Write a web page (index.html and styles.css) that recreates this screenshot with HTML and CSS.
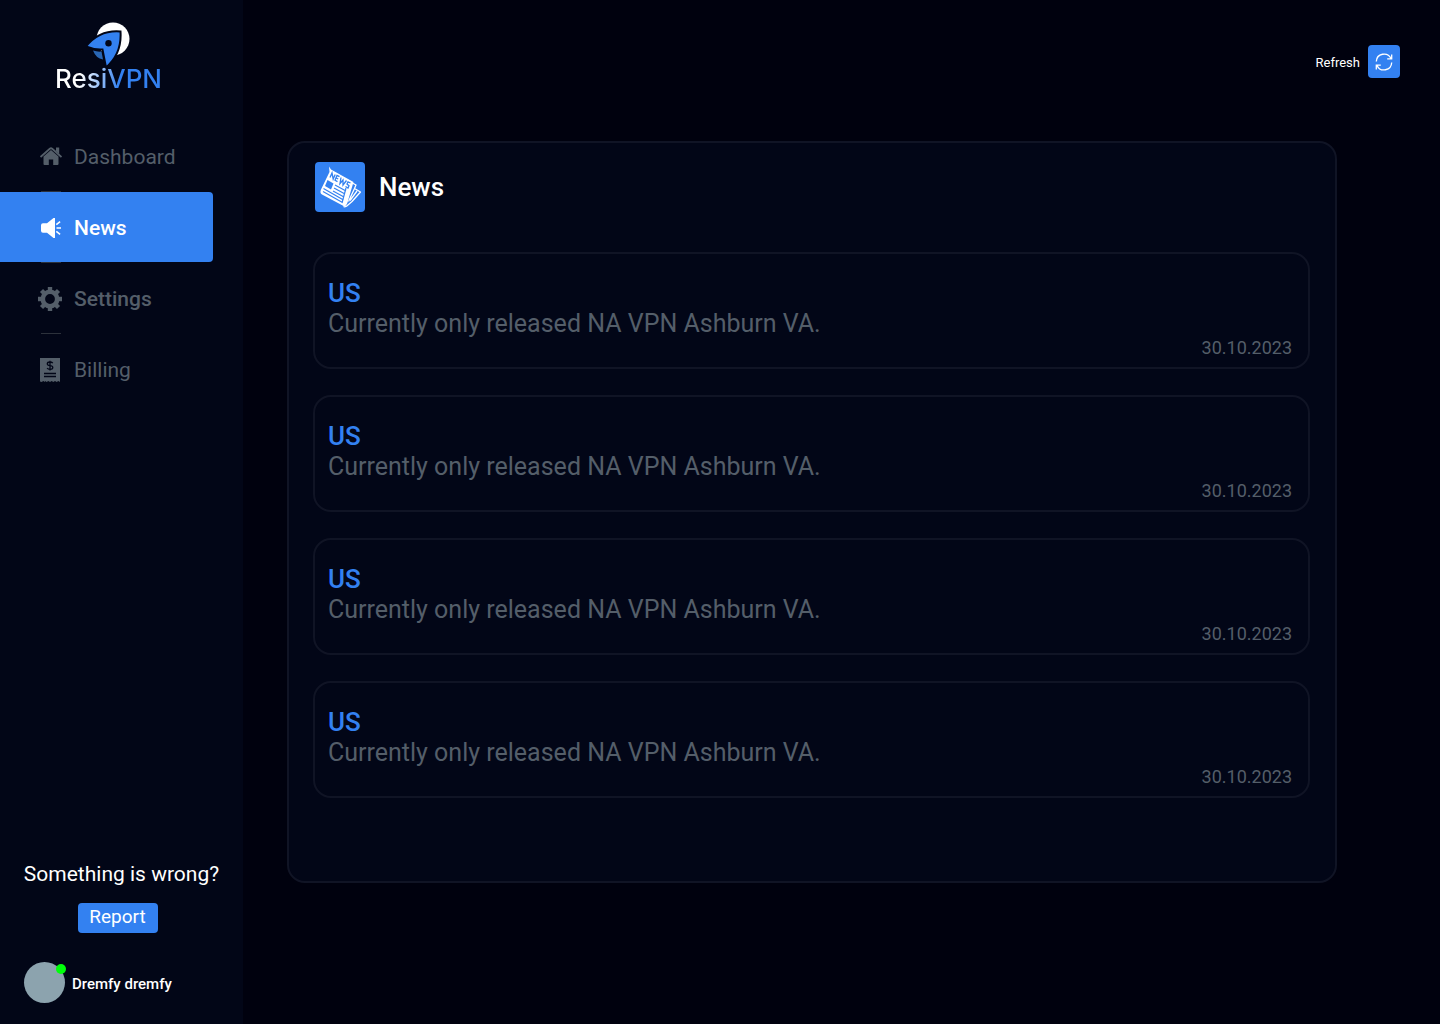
FILE: index.html
```html
<!DOCTYPE html>
<html lang="en">
<head>
<meta charset="utf-8">
<meta name="viewport" content="width=device-width, initial-scale=1">
<title>ResiVPN – News</title>
<link rel="stylesheet" href="styles.css">
</head>
<body>
<div class="app">
  <aside class="sidebar">
    <div class="logo">
      <svg class="logo-mark" width="46" height="46" viewBox="0 0 46 46" aria-hidden="true">
        <circle cx="27" cy="17" r="16.500" fill="#fff"/>
        <path d="M34.500 9.500C23 8.500 10 12 0 24.500c6 2.500 11 3.500 16.500 3l3.500 18C31 36 35.500 24 34.500 9.500Z" fill="#3381f1" stroke="#020617" stroke-width="2"/>
        <circle cx="22.500" cy="21.300" r="3.200" fill="#020617"/>
        <path d="M7 28.500c3 1 6 1.400 8.500 1l1.500 8q-7-1-10-9Z" fill="#2966b4"/>
      </svg>
      <span class="logo-name">ResiVPN</span>
    </div>
    <nav class="nav" aria-label="Main">
      <a class="nav-item" href="#dashboard">
        <svg class="nav-icon" viewBox="0 0 24 24" aria-hidden="true">
          <path d="M13 5 5.500 11.500V19q0 1 1 1h4.300v-5.500h4.400V20h4.300q1 0 1-1v-7.500Z"/>
          <path d="m2.500 12 9.300-8.200q1.200-1 2.400 0l9.300 8.200" fill="none" stroke="currentColor" stroke-width="1.800"/>
          <path d="M18 2.500h3.200V9L18 6.200Z"/>
        </svg>
        Dashboard
      </a>
      <a class="nav-item nav-item-active" href="#news" aria-current="page">
        <svg class="nav-icon" viewBox="0 0 24 24" aria-hidden="true">
          <path d="M5 7.200h4L15.500 2H17v20h-1.500L9 16.800H5q-2 0-2-2V9.200q0-2 2-2Z"/>
          <path d="M18.500 12H23M18.300 8.600l3.800-3M18.300 15.400l3.800 3" fill="none" stroke="currentColor" stroke-width="1.600"/>
        </svg>
        News
      </a>
      <a class="nav-item nav-item-medium" href="#settings">
        <svg class="nav-icon" viewBox="0 0 24 24" aria-hidden="true">
          <circle cx="12" cy="12" r="7.200" fill="none" stroke="currentColor" stroke-width="4.600"/>
          <path d="M12 0v4M12 20v4M0 12h4M20 12h4M3.500 3.500l3 3M17.500 17.500l3 3M3.500 20.500l3-3M17.500 6.500l3-3" stroke="currentColor" stroke-width="4.400"/>
        </svg>
        Settings
      </a>
      <a class="nav-item" href="#billing">
        <svg class="nav-icon" viewBox="0 0 24 24" aria-hidden="true">
          <path d="M2 0h20v24l-1.700-1-1.600 1-1.700-1-1.700 1-1.600-1-1.700 1-1.700-1-1.600 1-1.700-1L7 24l-1.700-1-1.600 1L2 23.500Z"/>
          <path d="M6 15.500h12M6 18.500h12M14.800 5.200q-1-1.200-2.800-1.200-2.700 0-2.700 1.800T12 7.700t2.800 1.900T12 11.300q-2 0-2.900-1.300M12 2.800v9.600" class="receipt-lines"/>
        </svg>
        Billing
      </a>
    </nav>
    <div class="support">
      <p class="support-text">Something is wrong?</p>
      <button class="report" type="button">Report</button>
    </div>
    <div class="user">
      <span class="avatar"><span class="status"></span></span>
      <span class="user-name">Dremfy dremfy</span>
    </div>
  </aside>
  <main class="main">
    <header class="topbar">
      <label class="refresh-label" for="refresh">Refresh</label>
      <button class="refresh" id="refresh" type="button">
        <svg width="18" height="18" viewBox="0 0 18 18" fill="none" stroke="#fff" stroke-width="1.300" aria-hidden="true">
          <path d="M1.300 8.500A7.700 7.700 0 0 1 16 5.600M16.700 1.500v4.400h-4.500M16.700 9.500A7.700 7.700 0 0 1 2 12.400M1.300 16.500v-4.400h4.500"/>
        </svg>
      </button>
    </header>
    <section class="panel">
      <div class="panel-head">
        <svg class="news-icon" width="50" height="50" viewBox="0 0 50 50" aria-hidden="true">
          <rect width="50" height="50" rx="4" fill="#3381f1"/>
          <path d="m14 4.500 2 3L38.500 20l-5 17q-1.500 7-4 7.500L7 32.500q-2.500-1.500-1-5L14.500 10Z" fill="#fff"/>
          <path d="M36.500 20.500 41 23l-1.500 3.500 6 3.500-8.500 9.500-5.500 4.700q-2 1-3 .3M39.500 26.500l-6 13M42 29l-7 9.500" fill="none" stroke="#fff" stroke-width="1.300" stroke-linejoin="round"/>
          <path d="m15 15.500 2-4.500 1.200 6 2-4.500M24.500 14.700l-2.500-1.300-2 4.800 2.500 1.400M21 15.800l2.200 1.200M26 15.500l-1 6 3-3.500v5l3.500-4.500M35.500 21l-2.500-1.200-1 2.200 2 1.700-1 2.300-2.500-1.500" fill="none" stroke="#3381f1" stroke-width="1.300"/>
          <path d="m12.500 18 6 3.500-2.500 6-6-3.500Z" fill="#3381f1"/>
          <path d="m20 23 11 6M19 26l11 6M18 29l11 6M8.500 26.500l20 11.500M8 29.500l19.500 11M31 26l-4 15" stroke="#3381f1" stroke-width="1.200"/>
        </svg>
        <h1 class="panel-title">News</h1>
      </div>
      <div class="news-list">
        <article class="news-card">
          <h2 class="news-region">US</h2>
          <p class="news-text">Currently only released NA VPN Ashburn VA.</p>
          <time class="news-date" datetime="2023-10-30">30.10.2023</time>
        </article>
        <article class="news-card">
          <h2 class="news-region">US</h2>
          <p class="news-text">Currently only released NA VPN Ashburn VA.</p>
          <time class="news-date" datetime="2023-10-30">30.10.2023</time>
        </article>
        <article class="news-card">
          <h2 class="news-region">US</h2>
          <p class="news-text">Currently only released NA VPN Ashburn VA.</p>
          <time class="news-date" datetime="2023-10-30">30.10.2023</time>
        </article>
        <article class="news-card">
          <h2 class="news-region">US</h2>
          <p class="news-text">Currently only released NA VPN Ashburn VA.</p>
          <time class="news-date" datetime="2023-10-30">30.10.2023</time>
        </article>
      </div>
    </section>
  </main>
</div>
</body>
</html>
```
FILE: styles.css
```css
:root {
  --blue: #3381f1;
  --panel: #020617;
  --line: #101425;
  --muted: #545e69;
}

* { box-sizing: border-box; }

body {
  margin: 0;
  background: #00010e;
  color: #fff;
  font-family: Roboto, sans-serif;
}

h1, h2, p { margin: 0; }

button {
  border: 0;
  border-radius: 4px;
  background: var(--blue);
  color: #fff;
  font-family: inherit;
  cursor: pointer;
}

.app {
  display: flex;
  min-height: 100vh;
}

.sidebar {
  display: flex;
  flex: none;
  flex-direction: column;
  width: 243px;
  padding-bottom: 21px;
  background: var(--panel);
}

.logo {
  display: flex;
  flex-direction: column;
  align-items: center;
  width: 217px;
  padding-top: 22px;
}

.logo-name {
  margin-top: -7px;
  background: linear-gradient(100deg, #fff 25%, var(--blue) 60%);
  background-clip: text;
  color: transparent;
  font: 500 26px/36px Inter, sans-serif;
}

.nav {
  display: flex;
  flex-direction: column;
  margin-top: 24px;
}

.nav-item {
  display: flex;
  align-items: center;
  gap: 12px;
  height: 70px;
  margin-right: 30px;
  padding: 2px 0 0 38px;
  color: var(--muted);
  font-size: 21px;
  text-decoration: none;
}

.nav-item + .nav-item::before {
  content: "";
  align-self: flex-start;
  width: 20px;
  height: 1px;
  margin: -3px -35px 0 3px;
  background: #2c313b;
}

.nav-item + .nav-item { margin-top: 1px; }

.nav-item-medium { font-weight: 500; }

.nav-item-active {
  border-radius: 0 4px 4px 0;
  background: var(--blue);
  color: #fff;
  font-weight: 500;
}

.nav-icon {
  width: 24px;
  height: 24px;
  fill: currentColor;
}

.receipt-lines {
  fill: none;
  stroke: var(--panel);
  stroke-width: 1.3px;
}

.support {
  display: flex;
  flex-direction: column;
  align-items: center;
  gap: 17px;
  margin-top: auto;
}

.support-text {
  font-size: 21px;
  line-height: 24px;
}

.report {
  width: 80px;
  height: 30px;
  margin-right: 8px;
  padding: 0 0 4px;
  font-size: 19px;
}

.user {
  display: flex;
  align-items: center;
  gap: 7px;
  margin-top: 29px;
  padding-left: 24px;
}

.avatar {
  position: relative;
  width: 41px;
  height: 41px;
  border-radius: 50%;
  background: #8ca3ae;
}

.status {
  position: absolute;
  top: 2px;
  right: -1px;
  width: 10px;
  height: 10px;
  border-radius: 50%;
  background: #00ff0a;
}

.user-name {
  padding-top: 2px;
  font-size: 15px;
  font-weight: 500;
}

.main {
  flex: 1;
  min-width: 0;
  padding: 45px 40px 141px 44px;
}

.topbar {
  display: flex;
  align-items: center;
  justify-content: flex-end;
  gap: 8px;
}

.refresh-label {
  padding-top: 1px;
  font-size: 13px;
}

.refresh {
  display: grid;
  place-items: center;
  width: 32px;
  height: 33px;
  padding: 0;
}

.panel {
  margin: 63px 63px 0 0;
  padding: 19px 25px 83px 24px;
  border: 2px solid var(--line);
  border-radius: 18px;
  background: var(--panel);
}

.panel-head {
  display: flex;
  align-items: center;
  gap: 14px;
  padding-left: 2px;
}

.panel-title {
  font-size: 26px;
  font-weight: 500;
}

.news-list {
  display: grid;
  gap: 26px;
  margin-top: 40px;
}

.news-card {
  display: flex;
  flex-direction: column;
  padding: 24px 16px 10px 13px;
  border: 2px solid var(--line);
  border-radius: 18px;
}

.news-region {
  color: var(--blue);
  font-size: 26px;
  font-weight: 500;
  line-height: 30px;
}

.news-text {
  color: var(--muted);
  font-size: 25px;
  line-height: 31px;
}

.news-date {
  align-self: flex-end;
  color: var(--muted);
  font-size: 18px;
  line-height: 18px;
}
```
